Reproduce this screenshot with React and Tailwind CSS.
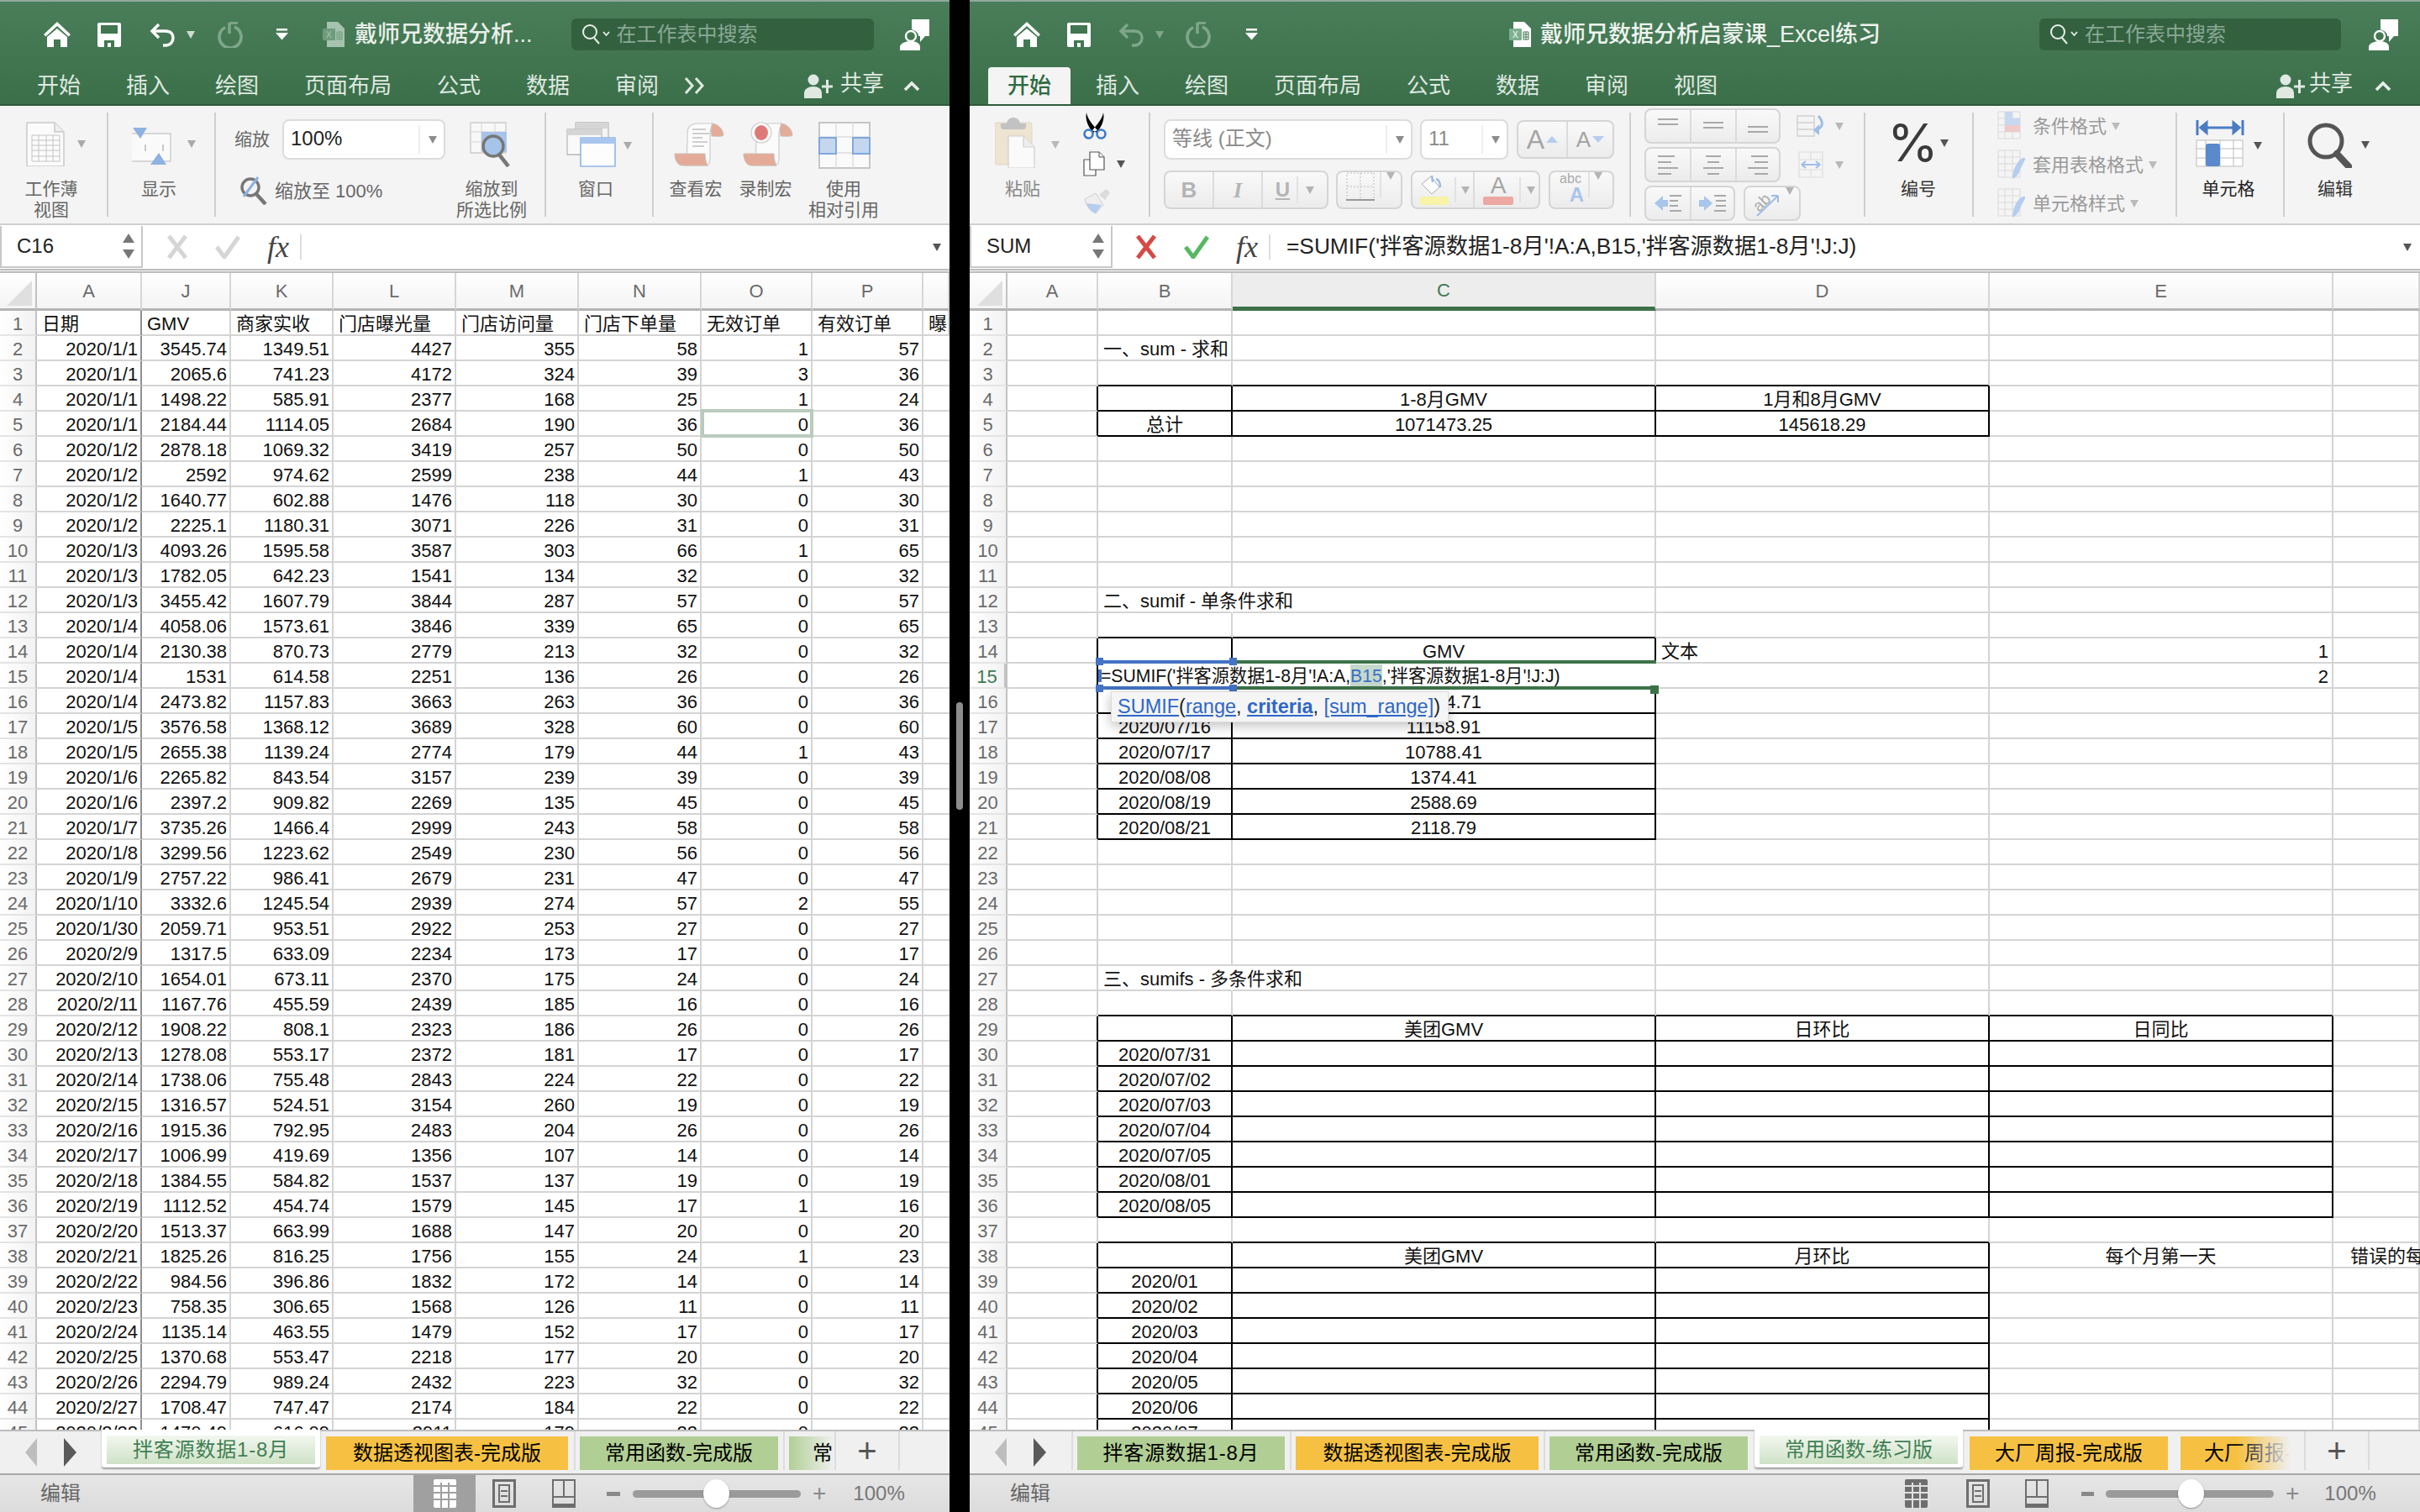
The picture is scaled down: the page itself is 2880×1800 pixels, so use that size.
import React from 'react'

const leftHead = ['日期', 'GMV', '商家实收', '门店曝光量', '门店访问量', '门店下单量', '无效订单', '有效订单', '曝光']
const leftData = `2020/1/1 3545.74 1349.51 4427 355 58 1 57
2020/1/1 2065.6 741.23 4172 324 39 3 36
2020/1/1 1498.22 585.91 2377 168 25 1 24
2020/1/1 2184.44 1114.05 2684 190 36 0 36
2020/1/2 2878.18 1069.32 3419 257 50 0 50
2020/1/2 2592 974.62 2599 238 44 1 43
2020/1/2 1640.77 602.88 1476 118 30 0 30
2020/1/2 2225.1 1180.31 3071 226 31 0 31
2020/1/3 4093.26 1595.58 3587 303 66 1 65
2020/1/3 1782.05 642.23 1541 134 32 0 32
2020/1/3 3455.42 1607.79 3844 287 57 0 57
2020/1/4 4058.06 1573.61 3846 339 65 0 65
2020/1/4 2130.38 870.73 2779 213 32 0 32
2020/1/4 1531 614.58 2251 136 26 0 26
2020/1/4 2473.82 1157.83 3663 263 36 0 36
2020/1/5 3576.58 1368.12 3689 328 60 0 60
2020/1/5 2655.38 1139.24 2774 179 44 1 43
2020/1/6 2265.82 843.54 3157 239 39 0 39
2020/1/6 2397.2 909.82 2269 135 45 0 45
2020/1/7 3735.26 1466.4 2999 243 58 0 58
2020/1/8 3299.56 1223.62 2549 230 56 0 56
2020/1/9 2757.22 986.41 2679 231 47 0 47
2020/1/10 3332.6 1245.54 2939 274 57 2 55
2020/1/30 2059.71 953.51 2922 253 27 0 27
2020/2/9 1317.5 633.09 2234 173 17 0 17
2020/2/10 1654.01 673.11 2370 175 24 0 24
2020/2/11 1167.76 455.59 2439 185 16 0 16
2020/2/12 1908.22 808.1 2323 186 26 0 26
2020/2/13 1278.08 553.17 2372 181 17 0 17
2020/2/14 1738.06 755.48 2843 224 22 0 22
2020/2/15 1316.57 524.51 3154 260 19 0 19
2020/2/16 1915.36 792.95 2483 204 26 0 26
2020/2/17 1006.99 419.69 1356 107 14 0 14
2020/2/18 1384.55 584.82 1537 137 19 0 19
2020/2/19 1112.52 454.74 1579 145 17 1 16
2020/2/20 1513.37 663.99 1688 147 20 0 20
2020/2/21 1825.26 816.25 1756 155 24 1 23
2020/2/22 984.56 396.86 1832 172 14 0 14
2020/2/23 758.35 306.65 1568 126 11 0 11
2020/2/24 1135.14 463.55 1479 152 17 0 17
2020/2/25 1370.68 553.47 2218 177 20 0 20
2020/2/26 2294.79 989.24 2432 223 32 0 32
2020/2/27 1708.47 747.47 2174 184 22 0 22
2020/2/28 1470.49 616.09 2911 179 22 0 22`.split('\n').map((l) => l.split(' '))

// right sheet: [row]: {B, C, D, E, F}
const rightCells = {
  2: { B: '一、sum - 求和' },
  4: { C: '1-8月GMV', D: '1月和8月GMV' },
  5: { B: '总计', C: '1071473.25', D: '145618.29' },
  12: { B: '二、sumif - 单条件求和' },
  14: { C: 'GMV', D: '文本', E: '1' },
  15: { E: '2' },
  16: { C: '11634.71' },
  17: { B: '2020/07/16', C: '11158.91' },
  18: { B: '2020/07/17', C: '10788.41' },
  19: { B: '2020/08/08', C: '1374.41' },
  20: { B: '2020/08/19', C: '2588.69' },
  21: { B: '2020/08/21', C: '2118.79' },
  27: { B: '三、sumifs - 多条件求和' },
  29: { C: '美团GMV', D: '日环比', E: '日同比' },
  30: { B: '2020/07/31' },
  31: { B: '2020/07/02' },
  32: { B: '2020/07/03' },
  33: { B: '2020/07/04' },
  34: { B: '2020/07/05' },
  35: { B: '2020/08/01' },
  36: { B: '2020/08/05' },
  38: { C: '美团GMV', D: '月环比', E: '每个月第一天', F: '错误的每个月第一天' },
  39: { B: '2020/01' },
  40: { B: '2020/02' },
  41: { B: '2020/03' },
  42: { B: '2020/04' },
  43: { B: '2020/05' },
  44: { B: '2020/06' },
  45: { B: '2020/07' },
}
const rightCols = ['A', 'B', 'C', 'D', 'E', 'F']
const tables = [
  [4, 5, 1, 3],
  [14, 21, 1, 2],
  [29, 36, 1, 4],
  [38, 45, 1, 3],
]
const inTable = (r, c) => tables.some(([r0, r1, c0, c1]) => r >= r0 && r <= r1 && c >= c0 && c <= c1)

function Caret({ className = 'text-[#8c8c8c]' }) {
  return (
    <svg width="10" height="9" viewBox="0 0 10 9" className={`shrink-0 ${className}`}>
      <path d="M0 0h10L5 9z" fill="currentColor" />
    </svg>
  )
}

function HomeIcon() {
  return (
    <svg width="32" height="30" viewBox="0 0 32 30" fill="#fff" className="shrink-0">
      <path d="M16 0 32 15l-2.4 2.4L16 5 2.4 17.4 0 15z" />
      <path d="M4 18 16 8l12 10v12h-8v-9h-8v9H4z" />
    </svg>
  )
}
function SaveIcon() {
  return (
    <svg width="28" height="29" viewBox="0 0 28 29" className="shrink-0">
      <path d="M2 0h24a2 2 0 0 1 2 2v25a2 2 0 0 1-2 2H2a2 2 0 0 1-2-2V2a2 2 0 0 1 2-2z" fill="#fff" />
      <rect x="4" y="3" width="20" height="10" fill="#417650" />
      <path d="M8 29v-8h12v8h-4v-5h-4v5z" fill="#417650" />
    </svg>
  )
}
function UndoIcon({ dim }) {
  return (
    <svg width="31" height="29" viewBox="0 0 31 29" fill="none" stroke={dim ? '#7fa68b' : '#fff'} strokeWidth="3.4" className="shrink-0">
      <path d="M11 2 3 10l8 8" />
      <path d="M3 10h16c6 0 9 3.5 9 8s-3 9-9 9h-3" />
    </svg>
  )
}
function RedoIcon() {
  return (
    <svg width="31" height="31" viewBox="0 0 31 31" fill="none" stroke="#7fa68b" strokeWidth="3.6" className="shrink-0">
      <path d="M10 6.5A13 13 0 1 0 21 6" />
      <path d="M15 1v13M15 1h10" />
    </svg>
  )
}
function QatIcon() {
  return (
    <svg width="15" height="14" viewBox="0 0 15 14" fill="#fff" className="shrink-0">
      <rect x="1" y="0" width="13" height="2.5" />
      <path d="M0 5h15l-7.5 8.5z" />
    </svg>
  )
}
function FileIcon({ dim }) {
  return (
    <svg width="26" height="30" viewBox="0 0 26 30" className="shrink-0">
      <path d="M5 0h13l8 8v22H5z" fill={dim ? '#a5c3ae' : '#fff'} />
      <rect x="0" y="8" width="15" height="14" rx="1" fill={dim ? '#6f9a7d' : '#7eb08f'} />
      <text x="4" y="19" fontSize="10" fill={dim ? '#a5c3ae' : '#fff'} fontFamily="Liberation Sans">X</text>
      <path d="M17 12h6v9h-6z M20 12v9M17 15h6M17 18h6" stroke={dim ? '#6f9a7d' : '#417650'} strokeWidth="1" fill="none" />
    </svg>
  )
}
function SearchGlyph() {
  return (
    <svg width="34" height="26" viewBox="0 0 34 26" fill="none" stroke="#e8efe9" strokeWidth="2" className="shrink-0">
      <circle cx="10" cy="10" r="8" />
      <path d="m15 17 6 7" />
      <path d="m26 10 3.5 4 3.5-4" strokeWidth="1.8" />
    </svg>
  )
}
function PersonChat() {
  return (
    <svg width="35" height="37" viewBox="0 0 35 37" fill="#fff" className="shrink-0">
      <path d="M14 0h21v20h-5l-6 7v-7h-2c0-4-3-6-8-8z" />
      <circle cx="13" cy="20" r="6" fill="none" stroke="#fff" strokeWidth="2.4" />
      <path d="M0 37v-4c0-4 6-7 13-7s11 3 11 7v4z" />
    </svg>
  )
}
function ShareIcon() {
  return (
    <svg width="34" height="30" viewBox="0 0 34 30" fill="#dfe9e1" className="shrink-0">
      <circle cx="11" cy="8" r="6.5" />
      <path d="M0 30v-6c0-5 5-8 11-8s10 3 10 8v6z" />
      <path d="M26 8h3v6.5h5v3h-5V24h-3v-6.500h-5v-3h5z" />
    </svg>
  )
}
function UpChevron() {
  return (
    <svg width="20" height="13" viewBox="0 0 20 13" fill="none" stroke="#e8efe9" strokeWidth="3.6" className="shrink-0">
      <path d="m2 11 8-8 8 8" />
    </svg>
  )
}

function Page({ children, w = 46, h = 53 }) {
  return (
    <svg width={w} height={h} viewBox={`0 0 ${w} ${h}`} className="shrink-0">
      {children}
    </svg>
  )
}

const WorkbookIcon = () => (
  <Page>
    <path d="M1 1h33l11 11v41H1z" fill="#fbfbfb" stroke="#c9c9c9" strokeWidth="1.5" />
    <path d="M34 1v11h11" fill="#eee" stroke="#c9c9c9" strokeWidth="1.5" />
    <path d="M7 16h33v31H7zM7 22h33M7 28h33M7 34h33M7 41h33M15 16v31M24 16v31M32 16v31" fill="none" stroke="#c4c4c4" strokeWidth="1" />
  </Page>
)
const ShowIcon = () => (
  <Page w={52} h={44}>
    <path d="M2 7h46v33H2" fill="#fafafa" stroke="#ccc" strokeWidth="1.4" />
    <path d="M18 20v8M39 20v8" stroke="#bbb" strokeWidth="1.5" />
    <path d="M3 0h17l-8 13z M24 44h19l-9-14z" fill="#8eb2e2" />
  </Page>
)
const ZoomMini = () => (
  <svg width="34" height="34" viewBox="0 0 34 34" fill="none" className="shrink-0">
    <circle cx="13" cy="13" r="10" stroke="#777" strokeWidth="3.4" />
    <path d="m20 21 11 12" stroke="#777" strokeWidth="4.5" />
    <path d="M5 24 22 1" stroke="#8cb0e0" strokeWidth="3" />
  </svg>
)
const ZoomFit = () => (
  <Page w={52} h={54}>
    <path d="M1 1h42v36H1z" fill="#f8f8f8" stroke="#ccc" strokeWidth="1.4" />
    <path d="M1 12h42M1 24h42M14 1v36M30 1v36" stroke="#d5d5d5" strokeWidth="1" />
    <rect x="14" y="12" width="30" height="24" fill="#a6c4ea" />
    <circle cx="28" cy="29" r="12" fill="#a6c4ea" stroke="#777" strokeWidth="3.4" />
    <path d="m35 39 11 14" stroke="#777" strokeWidth="4.5" />
  </Page>
)
const WindowIcon = () => (
  <Page w={60} h={54}>
    <path d="M11 1h39v38H11z" fill="#f5f5f5" stroke="#bbb" strokeWidth="1.3" />
    <path d="M11 1h39v7H11z" fill="#d5d5d5" />
    <path d="M1 9h41v30H1z" fill="#fafafa" stroke="#bbb" strokeWidth="1.3" />
    <path d="M1 9h41v7H1z" fill="#d5d5d5" />
    <path d="M17 19h41v34H17z" fill="#fdfdfd" stroke="#90b5e6" strokeWidth="1.6" />
    <path d="M17 19h41v7H17z" fill="#a8c6ee" />
  </Page>
)
const Scroll = ({ record }) => (
  <Page w={60} h={54}>
    <path d="M44 2c7 0 14 5 15 14-2 2-8 1-14 1z" fill="#e4ab98" stroke="#cdbcb4" strokeWidth="1" />
    <path d="M14 52c2-10 2-22 2-38C16 6 20 2 30 2h16c-2 4-3 7-3 14v28c0 4-2 8-4 8z" fill="#fbfbfb" stroke="#ccc" strokeWidth="1.2" />
    <path d="M1 38h36c0 6 1 10 3 14H10C5 52 1 46 1 38z" fill="#e4ab98" stroke="#cdbcb4" strokeWidth="1" />
    {record ? (
      <g>
        <circle cx="22" cy="13" r="12" fill="#fbfbfb" stroke="#ccc" strokeWidth="1.2" />
        <ellipse cx="22" cy="13" rx="8" ry="9" fill="#dd7a78" />
      </g>
    ) : (
      <path d="M22 9h16M22 14h20M22 19h12M22 24h18M22 29h14" stroke="#cfcfcf" strokeWidth="2" />
    )}
  </Page>
)
const RelRefIcon = () => (
  <Page w={62} h={56}>
    <path d="M1 1h60v54H1z" fill="#fafafa" stroke="#c6c6c6" strokeWidth="2" />
    <path d="M21 1v54M41 1v54M1 18h60M1 37h60" stroke="#ddd" strokeWidth="1.4" />
    <path d="M1 19h20v19H1zM41 19h20v19H41z" fill="#c5d7ee" stroke="#7fa8dc" strokeWidth="2" />
  </Page>
)
const PasteIcon = () => (
  <Page w={48} h={60}>
    <rect x="0" y="6" width="44" height="50" rx="3" fill="#efe3d2" stroke="#dfd4c2" />
    <path d="M7 10v-3h7c1-5 4-7 8-7s7 2 8 7h7v3c0 2-1 4-3 4H10c-2 0-3-2-3-4z" fill="#c2c2c2" />
    <path d="M16 22h18l13 13v25H16z" fill="#fafafa" stroke="#cfcfcf" strokeWidth="1.2" />
    <path d="M34 22v13h13" fill="#eee" stroke="#cfcfcf" strokeWidth="1.2" />
  </Page>
)
const ScissorsIcon = () => (
  <Page w={28} h={32}>
    <path d="M4 0c1 7 7 14 13 21l-5 3C6 17 2 8 4 0zM24 0c-1 7-7 14-13 21l5 3C22 17 26 8 24 0z" fill="#000" />
    <circle cx="6.500" cy="25.500" r="5" fill="none" stroke="#3c7bc6" strokeWidth="2.6" />
    <circle cx="21.500" cy="25.500" r="5" fill="none" stroke="#3c7bc6" strokeWidth="2.6" />
  </Page>
)
const CopyIcon = () => (
  <Page w={26} h={30}>
    <path d="M1 10h14v19H1z" fill="#fff" stroke="#555" strokeWidth="1.2" />
    <path d="M8 1h11l6 6v15H8z" fill="#fff" stroke="#555" strokeWidth="1.2" />
    <path d="M19 1v6h6" fill="#eee" stroke="#555" strokeWidth="1" />
  </Page>
)
const BrushIcon = () => (
  <Page w={32} h={30}>
    <path d="m2 13 13-7 9 14-9 10C9 28 4 22 2 13z" fill="#eee" stroke="#cfcfcf" />
    <path d="m4 18 18 2-7 10C10 29 6 24 4 18z" fill="#b5cdee" />
    <path d="m19 8 8-7 5 4-6 9z" fill="#dcdcdc" />
  </Page>
)

function Divider() {
  return <div className="w-[2px] h-[124px] mt-2 bg-[#cfcfcf] shrink-0" />
}

function Label({ children, className = 'text-[#666]' }) {
  return <div className={`text-[21px] leading-[24px] pt-[1px] text-center whitespace-nowrap ${className}`}>{children}</div>
}

function Combo({ className, text, textClass = 'text-[#8a8a8a]' }) {
  return (
    <div className={`h-[48px] bg-white border-2 border-[#dcdcdc] rounded-[8px] flex items-center pl-[8px] pr-[8px] shrink-0 ${className}`}>
      <span className={`text-[24px] pb-[3px] ${textClass}`}>{text}</span>
      <span className="ml-auto w-[2px] h-[34px] bg-[#eee] mr-[10px]" />
      <Caret />
    </div>
  )
}

function Btn({ className = '', children }) {
  return (
    <div className={`flex items-stretch bg-linear-to-b from-[#f9f9f9] to-[#ececec] border-2 border-[#d5d5d5] rounded-[8px] shrink-0 ${className}`}>
      {children}
    </div>
  )
}
function Seg({ className = '', children }) {
  return <div className={`flex items-center justify-center border-r-2 last:border-r-0 border-[#dcdcdc] ${className}`}>{children}</div>
}

function Lines({ rows }) {
  return (
    <svg width="28" height="26" viewBox="0 0 28 26" stroke="#a9a9a9" strokeWidth="2">
      {rows.map(([x1, x2, y], i) => (
        <path key={i} d={`M${x1} ${y}H${x2}`} />
      ))}
    </svg>
  )
}

function LeftRibbon() {
  return (
    <div className="h-[142px] bg-[#f4f4f4] border-b-2 border-[#cfcfcf] flex shrink-0 text-[#666]">
      <div className="w-[127px] shrink-0">
        <div className="h-[86px] pt-[19px] pl-[31px] flex items-start">
          <WorkbookIcon />
          <div className="ml-[15px] mt-[22px]"><Caret className="text-[#aaa]" /></div>
        </div>
        <div className="w-[122px]"><Label>工作薄</Label><Label>视图</Label></div>
      </div>
      <Divider />
      <div className="w-[126px] shrink-0">
        <div className="h-[86px] pt-[26px] pl-[26px] flex items-start">
          <ShowIcon />
          <div className="ml-[16px] mt-[15px]"><Caret className="text-[#aaa]" /></div>
        </div>
        <div className="w-[120px]"><Label>显示</Label></div>
      </div>
      <Divider />
      <div className="w-[273px] shrink-0">
        <div className="h-[64px] pt-[16px] pl-[22px] flex items-center">
          <span className="text-[21px] mr-[15px] text-[#666] whitespace-nowrap">缩放</span>
          <Combo className="w-[194px]" text="100%" textClass="text-[#222]" />
        </div>
        <div className="flex items-center pl-[28px] mt-[20px]">
          <ZoomMini />
          <span className="ml-[8px] text-[22px] text-[#666] whitespace-nowrap">缩放至 100%</span>
        </div>
      </div>
      <div className="w-[118px] shrink-0">
        <div className="h-[86px] pt-[19px] pl-[29px] flex items-start"><ZoomFit /></div>
        <div className="w-[110px]"><Label>缩放到</Label><Label>所选比例</Label></div>
      </div>
      <Divider />
      <div className="w-[126px] shrink-0">
        <div className="h-[86px] pt-[19px] pl-[24px] flex items-start">
          <WindowIcon />
          <div className="ml-[8px] mt-[24px]"><Caret className="text-[#aaa]" /></div>
        </div>
        <div className="w-[118px]"><Label>窗口</Label></div>
      </div>
      <Divider />
      <div className="flex pl-[24px]">
        <div className="w-[82px] shrink-0">
          <div className="h-[86px] pt-[19px] flex items-start"><Scroll /></div>
          <div className="w-[64px] -ml-[6px]"><Label>查看宏</Label></div>
        </div>
        <div className="w-[90px] shrink-0">
          <div className="h-[86px] pt-[19px] flex items-start"><Scroll record /></div>
          <div className="w-[64px] -ml-[5px]"><Label>录制宏</Label></div>
        </div>
        <div className="w-[100px] shrink-0">
          <div className="h-[86px] pt-[19px] flex items-start"><RelRefIcon /></div>
          <div className="w-[84px] -ml-[12px]"><Label>使用</Label><Label>相对引用</Label></div>
        </div>
      </div>
    </div>
  )
}

function RightRibbon() {
  return (
    <div className="h-[142px] bg-[#f4f4f4] border-b-2 border-[#cfcfcf] flex shrink-0">
      {/* paste */}
      <div className="w-[213px] shrink-0 flex">
        <div className="w-[130px] shrink-0">
          <div className="h-[86px] pt-[14px] pl-[30px] flex items-start">
            <PasteIcon />
            <div className="ml-[19px] mt-[28px]"><Caret className="text-[#b8b8b8]" /></div>
          </div>
          <div className="w-[120px] pl-[6px]"><Label className="text-[#888]">粘贴</Label></div>
        </div>
        <div className="pl-[5px] pt-[8px] flex flex-col gap-[14px]">
          <ScissorsIcon />
          <div className="flex items-center gap-[14px]"><CopyIcon /><Caret className="text-[#555]" /></div>
          <BrushIcon />
        </div>
      </div>
      <Divider />
      {/* font */}
      <div className="w-[570px] shrink-0 pl-[16px] pt-[16px]">
        <div className="flex items-center">
          <Combo className="w-[296px]" text="等线 (正文)" />
          <Combo className="w-[105px] ml-[9px]" text="11" />
          <Btn className="w-[116px] h-[46px] ml-[10px]">
            <Seg className="w-[59px]">
              <span className="text-[32px] text-[#a4a4a4]">A</span>
              <svg width="14" height="8" viewBox="0 0 14 8" className="ml-[2px]"><path d="M7 0l7 8H0z" fill="#b5cdee" /></svg>
            </Seg>
            <Seg className="flex-1">
              <span className="text-[26px] text-[#a4a4a4]">A</span>
              <svg width="14" height="8" viewBox="0 0 14 8" className="ml-[2px]"><path d="M0 0h14L7 8z" fill="#b5cdee" /></svg>
            </Seg>
          </Btn>
        </div>
        <div className="flex items-center mt-[13px]">
          <Btn className="w-[196px] h-[46px]">
            <Seg className="w-[58px]"><span className="text-[26px] font-bold text-[#b4b4b4]">B</span></Seg>
            <Seg className="w-[58px]"><span className="text-[26px] italic font-bold text-[#b4b4b4] font-['Liberation_Serif']">I</span></Seg>
            <div className="flex-1 flex items-center justify-center gap-[12px]">
              <span className="text-[24px] font-bold text-[#b4b4b4] underline underline-offset-2">U</span>
              <div className="w-[2px] h-[32px] bg-[#e2e2e2] -ml-[4px]" />
              <div className="-ml-[3px]"><Caret className="text-[#b4b4b4]" /></div>
            </div>
          </Btn>
          <Btn className="w-[79px] h-[46px] ml-[9px] items-center pl-[10px] gap-[6px]">
            <svg width="34" height="34" viewBox="0 0 34 34" fill="none"><path d="M1 1h32v32H1zM17 1v32M1 17h32" stroke="#cfcfcf" strokeWidth="1.5" strokeDasharray="2 2" /><path d="M0 33h34" stroke="#999" strokeWidth="2" /></svg>
            <div className="w-[2px] h-[30px] bg-[#e2e2e2]" />
            <Caret className="text-[#b4b4b4]" />
          </Btn>
          <Btn className="w-[154px] h-[46px] ml-[10px]">
            <Seg className="w-[74px] gap-[6px] pl-[4px]">
              <svg width="36" height="38" viewBox="0 0 36 38"><path d="m3 12 11-9 10 13-9 8z" fill="#fff" stroke="#aaa" /><path d="m15 2 1 8M20 6c4 1 5 5 5 10" stroke="#9dbde8" strokeWidth="2.500" fill="none" /><rect x="1" y="27" width="34" height="10" rx="1.500" fill="#f8f3a6" /></svg>
              <div className="w-[2px] h-[30px] bg-[#e2e2e2]" />
              <Caret className="text-[#b4b4b4]" />
            </Seg>
            <div className="flex-1 flex items-center gap-[7px] pl-[10px]">
              <div className="w-[36px] flex flex-col items-center">
                <span className="text-[28px] leading-[26px] text-[#a4a4a4]">A</span>
                <div className="w-[36px] h-[10px] rounded-[2px] bg-[#eda8a4]" />
              </div>
              <div className="w-[2px] h-[30px] bg-[#e2e2e2]" />
              <Caret className="text-[#b4b4b4]" />
            </div>
          </Btn>
          <Btn className="w-[78px] h-[46px] ml-[10px] items-center pl-[8px] gap-[5px]">
            <div className="w-[32px] flex flex-col items-center">
              <span className="text-[16px] leading-[16px] text-[#aaa]">abc</span>
              <span className="text-[24px] leading-[22px] font-bold text-[#a9c5ea] self-end">A</span>
            </div>
            <div className="w-[2px] h-[30px] bg-[#e2e2e2]" />
            <Caret className="text-[#b4b4b4]" />
          </Btn>
        </div>
      </div>
      <Divider />
      {/* alignment */}
      <div className="w-[277px] shrink-0 pl-[16px] pt-[3px] flex flex-col gap-[4px]">
        <div className="flex items-center">
          <Btn className="w-[162px] h-[42px]">
            <Seg className="w-[54px]"><Lines rows={[[2, 26, 5], [2, 26, 11]]} /></Seg>
            <Seg className="w-[54px]"><Lines rows={[[2, 26, 9], [2, 26, 15]]} /></Seg>
            <Seg className="flex-1"><Lines rows={[[2, 26, 14], [2, 26, 20]]} /></Seg>
          </Btn>
          <svg width="36" height="28" viewBox="0 0 36 28" fill="none" className="ml-[19px] mr-[10px]"><path d="M1 2h20v24H1zM1 10h20M1 18h20" stroke="#d0d0d0" strokeWidth="1.4" /><path d="M26 2c7 8 5 14-2 16" stroke="#9dbde8" strokeWidth="3" /><path d="m27 12-7 7 7 6z" fill="#9dbde8" /></svg>
          <Caret className="text-[#b8b8b8]" />
        </div>
        <div className="flex items-center">
          <Btn className="w-[162px] h-[42px]">
            <Seg className="w-[54px]"><Lines rows={[[2, 22, 3], [2, 18, 10], [2, 26, 17], [2, 18, 24]]} /></Seg>
            <Seg className="w-[54px]"><Lines rows={[[5, 23, 3], [7, 21, 10], [2, 26, 17], [7, 21, 24]]} /></Seg>
            <Seg className="flex-1"><Lines rows={[[6, 26, 3], [10, 26, 10], [2, 26, 17], [10, 26, 24]]} /></Seg>
          </Btn>
          <svg width="30" height="32" viewBox="0 0 30 32" fill="none" className="ml-[21px] mr-[14px]"><path d="M1 1h28v30H1zM1 10h28M1 22h28M15 1v9M15 22v9" stroke="#dcdcdc" strokeWidth="1.2" /><path d="M4 16h22M4 16l5-4M4 16l5 4M26 16l-5-4M26 16l-5 4" stroke="#9dbde8" strokeWidth="2" /></svg>
          <Caret className="text-[#b8b8b8]" />
        </div>
        <div className="flex items-center">
          <Btn className="w-[108px] h-[42px]">
            <Seg className="w-[54px]">
              <svg width="32" height="22" viewBox="0 0 32 22"><path d="M0 11 10 2v5h6v8h-6v5z" fill="#a9c5ea" /><path d="M18 2h14M18 8h10M18 14h10M18 20h14" stroke="#a9a9a9" strokeWidth="2" /></svg>
            </Seg>
            <Seg className="flex-1">
              <svg width="32" height="22" viewBox="0 0 32 22"><path d="M16 11 6 2v5H0v8h6v5z" fill="#a9c5ea" /><path d="M18 2h14M20 8h12M20 14h12M18 20h14" stroke="#a9a9a9" strokeWidth="2" /></svg>
            </Seg>
          </Btn>
          <Btn className="w-[68px] h-[42px] ml-[10px] items-center pl-[8px] gap-[6px]">
            <svg width="34" height="36" viewBox="0 0 34 36" fill="none">
              <text x="1" y="24" fontSize="19" fill="#aaa" transform="rotate(-45 12 18)" fontFamily="Liberation Sans">ab</text>
              <path d="M6 34 31 10M31 10h-8M31 10v8" stroke="#9dbde8" strokeWidth="2" />
            </svg>
            <Caret className="text-[#b4b4b4]" />
          </Btn>
        </div>
      </div>
      <Divider />
      {/* number */}
      <div className="w-[127px] shrink-0">
        <div className="h-[86px] pt-[10px] pl-[26px] flex items-start">
          <span className="text-[62px] leading-[68px] text-[#3a3a3a] font-['Inter'] font-normal">%</span>
          <div className="mt-[30px] ml-[2px]"><Caret className="text-[#555]" /></div>
        </div>
        <div className="w-[126px]"><Label className="text-[#333]">编号</Label></div>
      </div>
      <Divider />
      {/* styles */}
      <div className="w-[240px] shrink-0 pl-[28px] pt-[6px] flex flex-col gap-[10px]">
        {[
          ['条件格式', 'cf'],
          ['套用表格格式', 'tb'],
          ['单元格样式', 'cs'],
        ].map(([t, k]) => (
          <div key={k} className="flex items-center h-[36px]">
            <svg width="34" height="36" viewBox="0 0 34 36" fill="none" className="shrink-0">
              <path d="M1 1h26v32H1zM1 9h26M1 17h26M1 25h26M9 1v32M18 1v32" stroke="#dadada" strokeWidth="1" />
              {k === 'cf' ? (
                <path d="M9 1h9v8h9v8h-9v8H9z" fill="#c7d8f0" />
              ) : (
                <path d="M27 12c4-3 7-3 6 0l-6 12c-1 5-5 9-9 11 0-8 3-17 9-23z" fill="#b5cdee" />
              )}
              {k === 'cf' && <rect x="9" y="17" width="18" height="8" fill="#eecbc9" />}
            </svg>
            <span className="ml-[8px] text-[22px] text-[#9a9a9a] whitespace-nowrap">{t}</span>
            <div className="ml-[6px]"><Caret className="text-[#bbb]" /></div>
          </div>
        ))}
      </div>
      <Divider />
      {/* cells */}
      <div className="w-[126px] shrink-0">
        <div className="h-[86px] pt-[17px] pl-[22px] flex items-start">
          <svg width="58" height="56" viewBox="0 0 58 56" fill="none" className="shrink-0">
            <path d="M2 0v18M56 0v18" stroke="#4a7cc4" strokeWidth="3" />
            <path d="M6 9h46M6 9l7-6v12zM52 9l-7-6v12z" stroke="#4a7cc4" strokeWidth="3" fill="#4a7cc4" />
            <path d="M1 24h55v31H1zM1 34h55M1 45h55M12 24v31M29 24v31M45 24v31" stroke="#bbb" strokeWidth="1" fill="#fff" />
            <rect x="12" y="28" width="17" height="27" rx="2.500" fill="#5a8acb" />
          </svg>
          <div className="ml-[11px] mt-[26px]"><Caret className="text-[#555]" /></div>
        </div>
        <div className="w-[122px]"><Label className="text-[#222]">单元格</Label></div>
      </div>
      <Divider />
      {/* editing */}
      <div className="flex-1">
        <div className="h-[86px] pt-[20px] pl-[26px] flex items-start">
          <svg width="54" height="54" viewBox="0 0 54 54" fill="none" className="shrink-0">
            <circle cx="23" cy="22" r="19" stroke="#555" strokeWidth="5" />
            <path d="m36 37 14 15" stroke="#555" strokeWidth="8" strokeLinecap="round" />
          </svg>
          <div className="ml-[11px] mt-[22px]"><Caret className="text-[#555]" /></div>
        </div>
        <div className="w-[120px]"><Label className="text-[#333]">编辑</Label></div>
      </div>
    </div>
  )
}

function Spinner() {
  return (
    <div className="flex flex-col gap-[8px] text-[#777]">
      <svg width="14" height="11" viewBox="0 0 14 11"><path d="M7 0l7 11H0z" fill="#777" /></svg>
      <svg width="14" height="11" viewBox="0 0 14 11"><path d="M0 0h14L7 11z" fill="#777" /></svg>
    </div>
  )
}

function FormulaBar({ name, nameClass, active, children, crossX }) {
  return (
    <div className="shrink-0">
      <div className="h-[52px] bg-white flex items-center relative">
        <div className={`h-[50px] shrink-0 bg-white border-2 border-[#c8c8c8] border-t-0 flex items-center ${nameClass}`}>
          <span className="text-[24px] text-[#222]">{name}</span>
          <div className="ml-auto mr-[8px]"><Spinner /></div>
        </div>
        <div className={crossX}>
          <svg width="24" height="30" viewBox="0 0 24 30" fill="none" stroke={active ? '#d64a45' : '#d5d5d5'} strokeWidth="5"><path d="m2 2 20 26M22 2 2 28" /></svg>
        </div>
        <div className="ml-[33px]">
          <svg width="30" height="28" viewBox="0 0 30 28" fill="none" stroke={active ? '#57b862' : '#d5d5d5'} strokeWidth="5"><path d="m2 14 9 12L28 2" /></svg>
        </div>
        <span className="ml-[32px] font-['Liberation_Serif'] italic text-[36px] text-[#444] leading-none">fx</span>
        <div className="ml-[13px] w-[2px] h-[30px] bg-[#ddd]" />
        {children}
        <div className="ml-auto mr-[10px]"><Caret className="text-[#555]" /></div>
      </div>
      <div className="h-[5px] bg-[#f6f6f6] border-y-2 border-[#bdbdbd]" />
    </div>
  )
}

function HeaderCell({ children, className = '' }) {
  return (
    <div className={`h-[45px] flex items-center justify-center text-[22px] text-[#6b6b6b] bg-linear-to-b from-white to-[#f4f4f4] border-b-[3px] border-b-[#b5b5b5] border-r-2 border-r-[#d6d6d6] ${className}`}>
      {children}
    </div>
  )
}

function Corner() {
  return (
    <div className="h-[45px] bg-linear-to-b from-white to-[#f4f4f4] border-b-[3px] border-b-[#b5b5b5] border-r-2 border-r-[#c2c2c2] flex items-end justify-end pr-[4px] pb-[3px]">
      <svg width="30" height="30" viewBox="0 0 30 30"><path d="M30 0v30H0z" fill="#dfdfdf" /></svg>
    </div>
  )
}

function RowNo({ n, active }) {
  return (
    <div className={`h-[30px] pt-[2px] flex items-center justify-center text-[22px] bg-linear-to-r from-white to-[#f2f2f2] border-r-2 border-r-[#c2c2c2] border-b-2 border-b-[#e4e4e4] ${active ? 'text-[#3d7a4f] border-r-4 border-r-[#3d7249]' : 'text-[#6b6b6b]'}`}>
      {n}
    </div>
  )
}

function LeftSheet() {
  const heads = ['A', 'J', 'K', 'L', 'M', 'N', 'O', 'P', '']
  return (
    <div className="relative flex-1 overflow-hidden bg-white text-[22px] text-[#111]">
      <div className="grid grid-cols-[44px_125px_106px_122px_146px_146px_146px_132px_132px_31px]">
        <Corner />
        {heads.map((h, i) => (
          <HeaderCell key={i} className={i === 0 ? 'border-r-[#8f8f8f]' : ''}>{h}</HeaderCell>
        ))}
        <RowNo n={1} />
        {leftHead.map((h, i) => (
          <div key={i} className={`h-[30px] pt-[2px] pl-[6px] flex items-center whitespace-nowrap overflow-hidden border-b-2 border-b-[#d4d4d4] border-r-2 ${i === 0 ? 'border-r-[#8f8f8f]' : 'border-r-[#d4d4d4]'}`}>
            {h}
          </div>
        ))}
        {leftData.map((row, r) => (
          <React.Fragment key={r}>
            <RowNo n={r + 2} />
            {row.map((v, c) => (
              <div key={c} className={`h-[30px] pt-[2px] pr-[3px] flex items-center justify-end border-b-2 border-b-[#d4d4d4] border-r-2 ${c === 0 ? 'border-r-[#8f8f8f]' : 'border-r-[#d4d4d4]'}`}>
                {v}
              </div>
            ))}
            <div className="h-[30px] border-b-2 border-b-[#d4d4d4]" />
          </React.Fragment>
        ))}
      </div>
      {/* faded selection of the inactive window */}
      <div className="absolute left-[834px] top-[162px] w-[134px] h-[34px] border-[4px] border-[#b9cbbd]" />
    </div>
  )
}

function RightSheet() {
  const rows = Array.from({ length: 45 }, (_, i) => i + 1)
  return (
    <div className="relative flex-1 overflow-hidden bg-white text-[22px] text-[#111]">
      <div className="grid grid-cols-[45px_108px_160px_504px_397px_409px_103px]">
        <Corner />
        <HeaderCell>A</HeaderCell>
        <HeaderCell>B</HeaderCell>
        <HeaderCell className="text-[#3d7a4f]! bg-none! bg-[#ededed] border-b-[5px]! border-b-[#3d7249]!">C</HeaderCell>
        <HeaderCell>D</HeaderCell>
        <HeaderCell>E</HeaderCell>
        <HeaderCell className="border-r-0">{''}</HeaderCell>
        {rows.map((r) => (
          <React.Fragment key={r}>
            <RowNo n={r} active={r === 15} />
            {rightCols.map((col, c) => {
              const v = (rightCells[r] || {})[col]
              const right = inTable(r, c) || inTable(r, c + 1)
              const bottom = inTable(r, c) || inTable(r + 1, c)
              const overflow = (r === 12 || r === 27) && col === 'B'
              const left = (col === 'B' && (r === 2 || r === 12 || r === 27)) || (r === 14 && col === 'D')
              const far = r === 38 && col === 'F'
              const end = (r === 14 || r === 15) && col === 'E'
              return (
                <div
                  key={col}
                  className={`h-[30px] pt-[2px] flex items-center whitespace-nowrap border-b-2 border-r-2 ${
                    bottom ? 'border-b-black' : 'border-b-[#d4d4d4]'
                  } ${right ? 'border-r-black' : overflow ? 'border-r-transparent' : 'border-r-[#d4d4d4]'} ${
                    left ? 'justify-start pl-[6px]' : far ? 'justify-start pl-[20px]' : end ? 'justify-end pr-[4px]' : 'justify-center'
                  }`}
                >
                  {v}
                </div>
              )
            })}
          </React.Fragment>
        ))}
      </div>

      {/* cell being edited */}
      <div className="absolute left-[153px] top-[461px] w-[664px] h-[35px] pt-[2px] bg-white flex items-center pl-[3px] text-[21.2px] whitespace-nowrap">
        <span>=SUMIF('拌客源数据1-8月'!A:A,</span>
        <span className="bg-[#c4d9cb] text-[#3f6fc6] leading-[28px]">B15</span>
        <span>,'拌客源数据1-8月'!J:J)</span>
        <div className="absolute left-0 top-0 w-[160px] h-[4px] bg-[#4472c4]" />
        <div className="absolute left-0 bottom-0 w-[160px] h-[4px] bg-[#4472c4]" />
        <div className="absolute left-[160px] top-0 w-[504px] h-[4px] bg-[#3d7249]" />
        <div className="absolute left-[160px] bottom-0 w-[504px] h-[4px] bg-[#3d7249]" />
        <div className="absolute left-0 top-[11px] w-[4px] h-[15px] bg-[#4472c4]" />
        <div className="absolute -left-[3px] -top-[3px] w-[9px] h-[9px] bg-[#4472c4]" />
        <div className="absolute left-[156px] -top-[3px] w-[9px] h-[9px] bg-[#4472c4]" />
        <div className="absolute -left-[3px] -bottom-[3px] w-[9px] h-[9px] bg-[#4472c4]" />
        <div className="absolute left-[156px] -bottom-[3px] w-[9px] h-[9px] bg-[#4472c4]" />
        <div className="absolute -right-[3px] -bottom-[5px] w-[10px] h-[10px] bg-[#3d7249]" />
      </div>

      {/* function hint */}
      <div className="absolute left-[168px] top-[498px] w-[402px] h-[37px] bg-[#f5f5f5] border border-[#ddd] shadow-[0_4px_14px_rgba(0,0,0,0.25)] flex items-center pl-[7px] text-[23.5px] text-[#222] whitespace-nowrap">
        <span className="text-[#2f67c8] underline">SUMIF</span>(
        <span className="text-[#2f67c8] underline">range</span>,&nbsp;
        <span className="text-[#2f67c8] underline font-bold">criteria</span>,&nbsp;
        <span className="text-[#2f67c8] underline">[sum_range]</span>)
      </div>
    </div>
  )
}

function Arrows() {
  return (
    <>
      <svg width="14" height="34" viewBox="0 0 14 34"><path d="M14 0v34L0 17z" fill="#bdbdbd" /></svg>
      <svg width="15" height="34" viewBox="0 0 15 34"><path d="M0 0v34l15-17z" fill="#5a5a5a" /></svg>
    </>
  )
}

function ActiveTab({ className, children }) {
  return (
    <div className={`h-[45px] -mt-[2px] bg-white rounded-b-[3px] shadow-[0_2px_2px_rgba(0,0,0,0.35)] px-[6px] pt-[7px] shrink-0 ${className}`}>
      <div className="h-[34px] flex items-center justify-center bg-linear-to-b from-[#f2f7ef] to-[#cfe2c7] text-[#417f54] text-[24px] whitespace-nowrap">
        {children}
      </div>
    </div>
  )
}
function SheetTab({ className, children }) {
  return (
    <div className={`h-[40px] mt-[6px] flex items-center justify-center text-[24px] text-black shrink-0 whitespace-nowrap ${className}`}>
      {children}
    </div>
  )
}
function TabSep() {
  return <div className="w-[2px] h-[46px] bg-[#dcdcdc] shrink-0" />
}

function GridViewIcon({ light }) {
  const c = light ? '#fff' : '#6e6e6e'
  return (
    <svg width="27" height="34" viewBox="0 0 27 34" className="shrink-0">
      <rect width="27" height="34" rx="2" fill={c} />
      <path d="M0 8h27M0 16h27M0 24h27M9 4v30M18 4v30" stroke={light ? '#a0a0a0' : '#e0e0e0'} strokeWidth="2" />
    </svg>
  )
}
function PageViewIcon() {
  return (
    <svg width="28" height="34" viewBox="0 0 28 34" fill="none" stroke="#6e6e6e" className="shrink-0">
      <rect x="1.500" y="1.500" width="25" height="31" strokeWidth="3" />
      <rect x="8" y="7" width="12" height="20" strokeWidth="2" />
      <path d="M10 14h8M10 20h8" strokeWidth="2" />
    </svg>
  )
}
function BreakViewIcon() {
  return (
    <svg width="28" height="34" viewBox="0 0 28 34" fill="none" stroke="#6e6e6e" className="shrink-0">
      <rect x="1" y="1" width="26" height="32" strokeWidth="2" />
      <path d="M14 1v20M1 21h26" strokeWidth="2" />
      <path d="M1 31h26" strokeWidth="4" />
    </svg>
  )
}

function StatusBar({ children }) {
  return (
    <div className="h-[46px] shrink-0 bg-linear-to-b from-[#e6e6e6] to-[#dcdcdc] border-t-2 border-[#a8a8a8] flex items-center text-[24px] text-[#777]">
      {children}
    </div>
  )
}

function ZoomSlider({ widthClass, thumbClass }) {
  return (
    <div className={`relative h-[9px] rounded-full bg-[#9a9a9a] ${widthClass}`}>
      <div className={`absolute -top-[13px] w-[31px] h-[34px] rounded-[50%] bg-white shadow-[0_1px_2px_rgba(0,0,0,0.35)] ${thumbClass}`} />
    </div>
  )
}

function LeftWindow() {
  return (
    <div className="w-[1130px] h-full flex flex-col shrink-0 overflow-hidden">
      <div className="h-[126px] shrink-0 bg-linear-to-b from-[#4a7e5a] to-[#3b6f49] border-t-2 border-[#8fa99a] shadow-[inset_0_-2px_0_#2f5b3b] text-white">
        <div className="h-[78px] flex items-center pl-[52px]">
          <HomeIcon />
          <div className="ml-[32px]"><SaveIcon /></div>
          <div className="ml-[34px]"><UndoIcon /></div>
          <div className="ml-[13px]"><Caret className="text-[#cfdcd3]" /></div>
          <div className="ml-[26px]"><RedoIcon /></div>
          <div className="ml-[39px]"><QatIcon /></div>
          <div className="ml-[41px]"><FileIcon dim /></div>
          <span className="ml-[12px] text-[27px] font-medium text-[#e8efe9] whitespace-nowrap">戴师兄数据分析...</span>
          <div className="ml-[46px] w-[360px] h-[38px] rounded-[6px] bg-[#33613f] flex items-center pl-[12px]">
            <SearchGlyph />
            <span className="ml-[8px] text-[24px] text-[#8aa896] whitespace-nowrap">在工作表中搜索</span>
          </div>
          <div className="ml-[31px]"><PersonChat /></div>
        </div>
        <div className="h-[44px] flex items-center pl-[44px] text-[26px] text-[#dfe9e1]">
          <div className="flex gap-[54px]">
            {['开始', '插入', '绘图', '页面布局', '公式', '数据', '审阅'].map((t) => (
              <span key={t} className="whitespace-nowrap">{t}</span>
            ))}
          </div>
          <svg width="24" height="22" viewBox="0 0 24 22" fill="none" stroke="#dfe9e1" strokeWidth="3" className="ml-[30px]"><path d="m2 2 8 9-8 9M14 2l8 9-8 9" /></svg>
          <div className="ml-[119px]"><ShareIcon /></div>
          <span className="ml-[9px] -mt-[6px]">共享</span>
          <div className="ml-[23px]"><UpChevron /></div>
        </div>
      </div>
      <LeftRibbon />
      <FormulaBar name="C16" nameClass="w-[170px] pl-[18px]" crossX="ml-[29px]" />
      <LeftSheet />
      <div className="h-[52px] shrink-0 bg-[#f0f0f0] border-t-2 border-[#bdbdbd] flex items-start">
        <div className="flex items-center gap-[32px] pl-[30px] w-[121px] h-[50px] shrink-0"><Arrows /></div>
        <ActiveTab className="w-[260px]"><span className="tracking-[0.8px]">拌客源数据1-8月</span></ActiveTab>
        <SheetTab className="w-[288px] ml-[7px] bg-[#f6c142]">数据透视图表-完成版</SheetTab>
        <div className="w-[7px]" />
        <TabSep />
        <div className="w-[5px]" />
        <SheetTab className="w-[236px] bg-[#b1cf95]">常用函数-完成版</SheetTab>
        <div className="w-[6px]" />
        <TabSep />
        <div className="w-[5px]" />
        <SheetTab className="w-[54px] overflow-hidden justify-start pl-[28px] bg-linear-to-r from-[#b1cf95] to-[#f0f0f0] text-[#cfcfcf]">常</SheetTab>
        <TabSep />
        <div className="w-[74px] h-[46px] flex items-center justify-center text-[#555] text-[40px] font-light leading-none shrink-0">+</div>
        <TabSep />
      </div>
      <StatusBar>
        <span className="ml-[48px] text-[#666]">编辑</span>
        <div className="ml-[396px] w-[74px] h-[44px] bg-[#a0a0a0] flex items-center justify-center"><GridViewIcon light /></div>
        <div className="ml-[20px]"><PageViewIcon /></div>
        <div className="ml-[43px]"><BreakViewIcon /></div>
        <div className="ml-[37px] w-[16px] h-[5px] bg-[#888]" />
        <div className="ml-[15px]"><ZoomSlider widthClass="w-[200px]" thumbClass="left-[84px]" /></div>
        <span className="ml-[14px] text-[#888] text-[28px] leading-none">+</span>
        <span className="ml-[32px] text-[24px] text-[#777]">100%</span>
      </StatusBar>
    </div>
  )
}

function RightWindow() {
  return (
    <div className="flex-1 h-full flex flex-col overflow-hidden">
      <div className="h-[126px] shrink-0 bg-linear-to-b from-[#4a7e5a] to-[#3b6f49] border-t-2 border-[#8fa99a] shadow-[inset_0_-2px_0_#2f5b3b] text-white">
        <div className="h-[78px] flex items-center pl-[52px] pr-[26px]">
          <HomeIcon />
          <div className="ml-[32px]"><SaveIcon /></div>
          <div className="ml-[33px]"><UndoIcon dim /></div>
          <div className="ml-[13px]"><Caret className="text-[#7fa68b]" /></div>
          <div className="ml-[25px]"><RedoIcon /></div>
          <div className="ml-[41px]"><QatIcon /></div>
          <div className="ml-[299px]"><FileIcon /></div>
          <span className="ml-[11px] text-[27px] font-medium text-[#eef3ef] whitespace-nowrap">戴师兄数据分析启蒙课_Excel练习</span>
          <div className="ml-auto w-[359px] h-[38px] rounded-[6px] bg-[#33613f] flex items-center pl-[12px]">
            <SearchGlyph />
            <span className="ml-[8px] text-[24px] text-[#8aa896] whitespace-nowrap">在工作表中搜索</span>
          </div>
          <div className="ml-[33px]"><PersonChat /></div>
        </div>
        <div className="h-[44px] flex items-end pl-[22px] pr-[34px] text-[26px] text-[#dfe9e1]">
          <div className="w-[98px] h-[44px] bg-[#f4f4f4] rounded-t-[4px] flex items-center justify-center text-[#2f6b41] font-medium shrink-0">开始</div>
          <div className="ml-[30px] h-[44px] flex items-center gap-[54px]">
            {['插入', '绘图', '页面布局', '公式', '数据', '审阅', '视图'].map((t) => (
              <span key={t} className="whitespace-nowrap">{t}</span>
            ))}
          </div>
          <div className="ml-auto h-[44px] flex items-center">
            <ShareIcon />
            <span className="ml-[5px] -mt-[6px]">共享</span>
            <div className="ml-[26px]"><UpChevron /></div>
          </div>
        </div>
      </div>
      <RightRibbon />
      <FormulaBar name="SUM" nameClass="w-[170px] pl-[18px]" crossX="ml-[28px]" active>
        <span className="ml-[19px] text-[26.3px] text-[#222] whitespace-nowrap">=SUMIF('拌客源数据1-8月'!A:A,B15,'拌客源数据1-8月'!J:J)</span>
      </FormulaBar>
      <RightSheet />
      <div className="h-[52px] shrink-0 bg-[#f0f0f0] border-t-2 border-[#bdbdbd] flex items-start">
        <div className="flex items-center gap-[32px] pl-[30px] w-[121px] h-[50px] shrink-0"><Arrows /></div>
        <TabSep />
        <div className="w-[5px]" />
        <SheetTab className="w-[247px] bg-[#b1cf95]"><span className="tracking-[0.8px]">拌客源数据1-8月</span></SheetTab>
        <div className="w-[6px]" />
        <TabSep />
        <div className="w-[5px]" />
        <SheetTab className="w-[289px] bg-[#f6c142]">数据透视图表-完成版</SheetTab>
        <div className="w-[6px]" />
        <TabSep />
        <div className="w-[5px]" />
        <SheetTab className="w-[236px] bg-[#b1cf95]">常用函数-完成版</SheetTab>
        <ActiveTab className="w-[248px] ml-[8px]">常用函数-练习版</ActiveTab>
        <SheetTab className="w-[236px] ml-[8px] bg-[#f6c142]">大厂周报-完成版</SheetTab>
        <SheetTab className="relative w-[147px] ml-[15px] overflow-hidden justify-start pl-[28px] bg-[#f6c142]">
          大厂周报-练习版
          <div className="absolute right-0 top-0 h-full w-[80px] bg-linear-to-r from-transparent to-[#f0f0f0] to-80%" />
        </SheetTab>
        <TabSep />
        <div className="w-[74px] h-[46px] flex items-center justify-center text-[#555] text-[40px] font-light leading-none shrink-0">+</div>
        <TabSep />
      </div>
      <StatusBar>
        <span className="ml-[48px] text-[#666]">编辑</span>
        <div className="ml-[1017px]"><GridViewIcon /></div>
        <div className="ml-[46px]"><PageViewIcon /></div>
        <div className="ml-[42px]"><BreakViewIcon /></div>
        <div className="ml-[39px] w-[15px] h-[5px] bg-[#888]" />
        <div className="ml-[14px]"><ZoomSlider widthClass="w-[200px]" thumbClass="left-[86px]" /></div>
        <span className="ml-[14px] text-[#888] text-[28px] leading-none">+</span>
        <span className="ml-[30px] text-[24px] text-[#777]">100%</span>
      </StatusBar>
    </div>
  )
}

export default function App() {
  return (
    <div className="w-[2880px] h-[1800px] bg-black flex overflow-hidden font-['Liberation_Sans','Noto_Sans_CJK_SC',sans-serif]">
      <LeftWindow />
      <div className="w-[24px] shrink-0 flex justify-center items-start pt-[836px]">
        <div className="w-[8px] h-[128px] rounded-full bg-[#8c8c8c]" />
      </div>
      <RightWindow />
    </div>
  )
}
